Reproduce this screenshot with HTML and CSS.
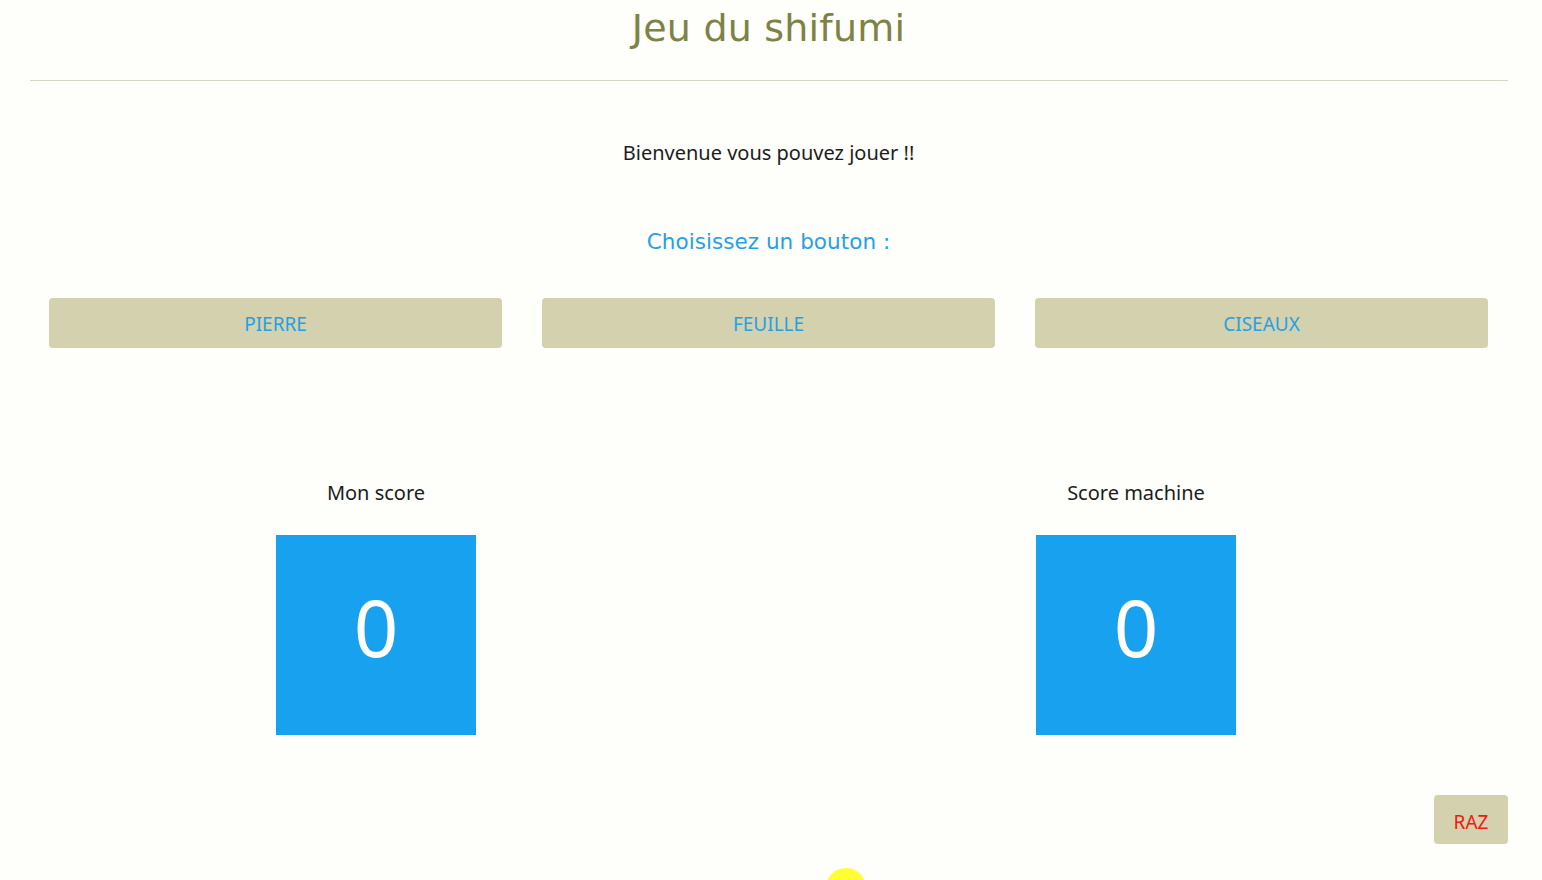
FILE: index.html
```html
<!DOCTYPE html>
<html lang="fr">
<head>
<meta charset="utf-8">
<title>Jeu du shifumi</title>
<link rel="stylesheet" href="styles.css">
</head>
<body>
<div class="page">
  <h1 class="title">Jeu du shifumi</h1>
  <hr class="sep">
  <p class="welcome">Bienvenue vous pouvez jouer !!</p>
  <p class="choose">Choisissez un bouton :</p>
  <div class="choices">
    <div class="col"><button class="btn">PIERRE</button></div>
    <div class="col"><button class="btn">FEUILLE</button></div>
    <div class="col"><button class="btn">CISEAUX</button></div>
  </div>
  <div class="scores">
    <div class="score">
      <div class="score-label">Mon score</div>
      <div class="score-box">0</div>
    </div>
    <div class="score">
      <div class="score-label">Score machine</div>
      <div class="score-box">0</div>
    </div>
  </div>
  <div class="footer">
    <button class="raz">RAZ</button>
  </div>
</div>
<div class="cursor"></div>
</body>
</html>
```
FILE: styles.css
```css
html, body {
  margin: 0;
  padding: 0;
  height: 100%;
  overflow: hidden;
}
body {
  background: #fefefb;
  font-family: "Noto Sans", "Open Sans", sans-serif;
  color: #222;
}
.page {
  padding: 0 34px 0 29px;
}
.title {
  margin: 0;
  height: 56px;
  line-height: 56px;
  text-align: center;
  font-family: Verdana, "DejaVu Sans", "Noto Sans", sans-serif;
  font-weight: normal;
  font-size: 38px;
  letter-spacing: 0.2px;
  color: #7f8245;
}
.sep {
  margin: 24px 0 0 1px;
  border: 0;
  border-top: 1px solid #d6d6c0;
  height: 0;
}
.welcome {
  margin: 58px 0 0;
  text-align: center;
  font-size: 20px;
  line-height: 28px;
  color: #1c1c1c;
}
.choose {
  margin: 61px 0 0;
  text-align: center;
  font-family: Verdana, "DejaVu Sans", "Noto Sans", sans-serif;
  font-size: 21.5px;
  line-height: 28px;
  letter-spacing: 0.05px;
  color: #27a0e3;
}
.choices {
  display: grid;
  grid-template-columns: repeat(3, 1fr);
  margin-top: 42px;
}
.col {
  padding: 0 20px;
}
.btn {
  display: block;
  width: 100%;
  height: 50px;
  border: 0;
  border-radius: 4px;
  background: #d3d1ae;
  color: #27a0e3;
  font-family: "Noto Sans", "Open Sans", sans-serif;
  font-size: 19px;
  padding: 2px 0 0;
}
.scores {
  display: flex;
  gap: 560px;
  padding-left: 247px;
  margin-top: 131px;
}
.score {
  width: 200px;
}
.score-label {
  text-align: center;
  font-size: 20px;
  line-height: 28px;
  color: #1c1c1c;
}
.score-box {
  margin-top: 28px;
  width: 200px;
  height: 200px;
  background: #17a1ef;
  color: #fff;
  display: flex;
  align-items: center;
  justify-content: center;
  font-size: 78px;
  line-height: 1;
  padding-bottom: 16px;
  box-sizing: border-box;
}
.footer {
  display: flex;
  justify-content: flex-end;
  margin-top: 60px;
}
.raz {
  width: 74px;
  height: 49px;
  border: 0;
  border-radius: 4px;
  background: #d3d1ae;
  color: #f01a10;
  font-family: "Noto Sans", "Open Sans", sans-serif;
  font-size: 19px;
  padding: 4px 0 0;
}
.cursor {
  position: absolute;
  left: 826px;
  top: 868px;
  width: 40px;
  height: 40px;
  border-radius: 50%;
  background: #ffff33;
}
```
